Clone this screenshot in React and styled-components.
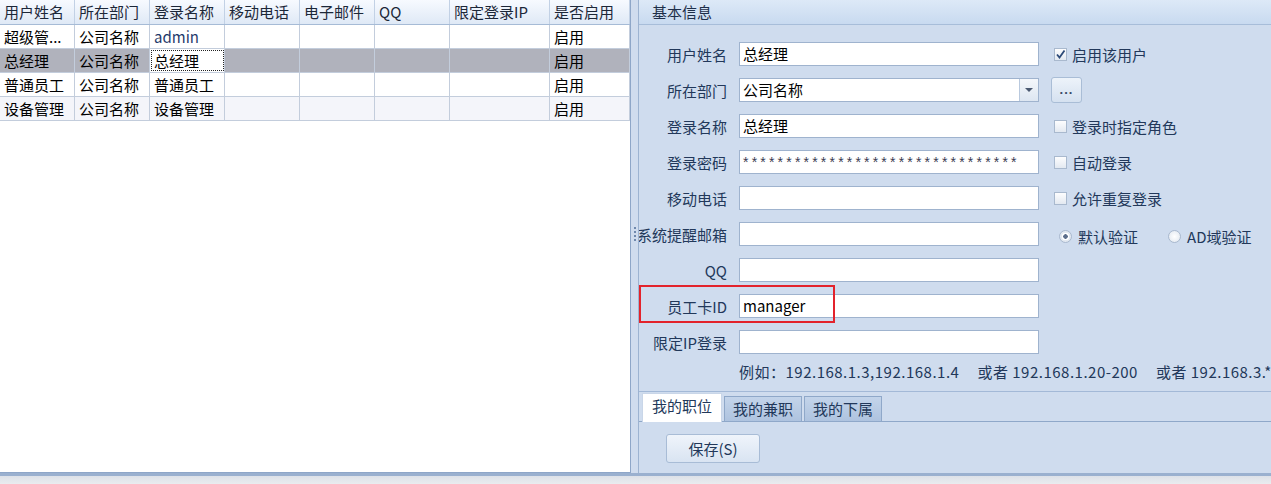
import React from 'react';
import styled, { createGlobalStyle } from 'styled-components';

const GlobalStyle = createGlobalStyle`
  html, body {
    margin: 0;
    padding: 0;
  }
  body {
    width: 1271px;
    height: 484px;
    overflow: hidden;
    background: #e4e6ea;
    font-family: "Noto Sans CJK SC", "Noto Sans", sans-serif;
  }
  * {
    box-sizing: border-box;
  }
`;

const columns = [
    { title: '用户姓名', width: 75 },
    { title: '所在部门', width: 75 },
    { title: '登录名称', width: 75 },
    { title: '移动电话', width: 75 },
    { title: '电子邮件', width: 75 },
    { title: 'QQ', width: 75 },
    { title: '限定登录IP', width: 100 },
    { title: '是否启用', width: 80 },
];

const users = [
    ['超级管...', '公司名称', 'admin', '', '', '', '', '启用'],
    ['总经理', '公司名称', '总经理', '', '', '', '', '启用'],
    ['普通员工', '公司名称', '普通员工', '', '', '', '', '启用'],
    ['设备管理', '公司名称', '设备管理', '', '', '', '', '启用'],
];

const fields = [
    { label: '用户姓名', value: '总经理', extra: { type: 'check', text: '启用该用户', checked: true } },
    { label: '所在部门', value: '公司名称', combo: true, extra: { type: 'more' } },
    { label: '登录名称', value: '总经理', extra: { type: 'check', text: '登录时指定角色' } },
    { label: '登录密码', value: '********************************', password: true, extra: { type: 'check', text: '自动登录' } },
    { label: '移动电话', value: '', extra: { type: 'check', text: '允许重复登录' } },
    { label: '系统提醒邮箱', value: '', extra: { type: 'radio' } },
    { label: 'QQ', value: '' },
    { label: '员工卡ID', value: 'manager', marked: true },
    { label: '限定IP登录', value: '' },
];

function App() {
    return (
        <>
            <GlobalStyle />
            <Window>
                <Main>
                    <GridPane>
                        <GridRow header>
                            {columns.map((col) => (
                                <HeaderCell key={col.title} w={col.width}>{col.title}</HeaderCell>
                            ))}
                        </GridRow>
                        {users.map((row, r) => (
                            <GridRow key={r} selected={r === 1} alt={r === 3}>
                                {row.map((cell, c) => (
                                    <Cell
                                        key={c}
                                        w={columns[c].width}
                                        focused={r === 1 && c === 2}
                                        link={cell === 'admin'}
                                    >
                                        {cell}
                                    </Cell>
                                ))}
                            </GridRow>
                        ))}
                    </GridPane>

                    <Splitter>
                        <Grip />
                    </Splitter>

                    <RightPane>
                        <Group>
                            <GroupTitle>基本信息</GroupTitle>
                            <GroupBody>
                                <Form>
                                    {fields.map((f) => (
                                        <React.Fragment key={f.label}>
                                            <Label>
                                                {f.marked && <Marker />}
                                                <span>{f.label}</span>
                                            </Label>
                                            {f.combo ? (
                                                <Combo>
                                                    <ComboText>{f.value}</ComboText>
                                                    <ComboButton><Arrow /></ComboButton>
                                                </Combo>
                                            ) : (
                                                <TextBox password={f.password}>{f.value}</TextBox>
                                            )}
                                            <Extra>
                                                {f.extra && f.extra.type === 'check' && (
                                                    <CheckOption>
                                                        <CheckBox>
                                                            {f.extra.checked && (
                                                                <svg width="11" height="11" viewBox="0 0 11 11">
                                                                    <path d="M2 5.5 L4.5 8.5 L9.5 1.5" fill="none" stroke="#2c4a78" strokeWidth="1.8" />
                                                                </svg>
                                                            )}
                                                        </CheckBox>
                                                        {f.extra.text}
                                                    </CheckOption>
                                                )}
                                                {f.extra && f.extra.type === 'more' && <MoreButton>...</MoreButton>}
                                                {f.extra && f.extra.type === 'radio' && (
                                                    <Radios>
                                                        <RadioOption>
                                                            <RadioDot checked />
                                                            默认验证
                                                        </RadioOption>
                                                        <RadioOption>
                                                            <RadioDot />
                                                            AD域验证
                                                        </RadioOption>
                                                    </Radios>
                                                )}
                                            </Extra>
                                        </React.Fragment>
                                    ))}
                                </Form>
                                <Hint>
                                    <span>例如：192.168.1.3,192.168.1.4</span>
                                    <span>或者 192.168.1.20-200</span>
                                    <span>或者 192.168.3.*</span>
                                </Hint>
                            </GroupBody>
                        </Group>

                        <TabStrip>
                            <Tab active>我的职位</Tab>
                            <Tab>我的兼职</Tab>
                            <Tab>我的下属</Tab>
                        </TabStrip>

                        <ButtonBar>
                            <SaveButton>保存(S)</SaveButton>
                        </ButtonBar>
                    </RightPane>
                </Main>
                <StatusStrip />
            </Window>
        </>
    )
}

export default App

const Window = styled.div`
    width: 1271px;
    height: 484px;
    display: flex;
    flex-direction: column;
`

const Main = styled.div`
    height: 476px;
    display: flex;
    border-bottom: 3px solid #9ab0cf;
    box-shadow: 0 1px 0 #8aa2c4;
`

const StatusStrip = styled.div`
    flex: 1;
    background: linear-gradient(#dde1e8, #eaecef);
`

const GridPane = styled.div`
    width: 631px;
    background: #fff;
    border-right: 1px solid #8ea6c8;
    border-bottom: 1px solid #8ea6c8;
    overflow: hidden;
`

const GridRow = styled.div`
    display: flex;
    height: ${props => props.header ? '25px' : '24px'};
    background: ${props => props.header
        ? 'linear-gradient(#f7faff, #dfe9f6)'
        : props.selected ? '#b0b2bc' : props.alt ? '#f4f5fa' : '#fff'};
    border-bottom: 1px solid ${props => props.header ? '#a6bbd6' : '#c3cddc'};
`

const HeaderCell = styled.div`
    width: ${props => props.w}px;
    flex: none;
    padding: 0 4px;
    border-right: 1px solid #c2d1e5;
    font-size: 15px;
    line-height: 24px;
    color: #1c2738;
    white-space: nowrap;
    overflow: hidden;
`

const Cell = styled.div`
    width: ${props => props.w}px;
    flex: none;
    padding: 0 4px;
    border-right: 1px solid #c3cddc;
    font-size: 15px;
    line-height: 23px;
    color: ${props => props.link ? '#1f3a6a' : '#000'};
    white-space: nowrap;
    overflow: hidden;
    background: ${props => props.focused ? '#fff' : 'transparent'};
    outline: ${props => props.focused ? '1px dotted #222' : 'none'};
    outline-offset: -2px;
`

const Splitter = styled.div`
    width: 8px;
    flex: none;
    background: #d0dcee;
    border-right: 1px solid #9db3d1;
    display: flex;
    align-items: center;
    justify-content: center;
`

const Grip = styled.div`
    width: 2px;
    height: 14px;
    margin-top: -6px;
    background: repeating-linear-gradient(#6f88ad 0 2px, transparent 2px 4px);
`

const RightPane = styled.div`
    flex: 1;
    min-width: 0;
    background: #cfdcee;
    display: flex;
    flex-direction: column;
    overflow: hidden;
`

const Group = styled.div`
    border-bottom: 1px solid #a3b9d7;
`

const GroupTitle = styled.div`
    height: 25px;
    padding-left: 13px;
    background: linear-gradient(#dde9f7, #c8daf0);
    border-bottom: 1px solid #a7bdd9;
    font-size: 15px;
    line-height: 24px;
    color: #1e2f4a;
`

const GroupBody = styled.div`
    padding: 17px 0 9px;
    overflow: hidden;
`

const Form = styled.div`
    display: grid;
    grid-template-columns: 88px 300px 1fr;
    grid-auto-rows: 24px;
    column-gap: 12px;
    row-gap: 12px;
`

const Label = styled.div`
    position: relative;
    display: flex;
    justify-content: flex-end;
    align-items: center;
    white-space: nowrap;
    font-size: 15px;
    color: #22385a;
`

const Marker = styled.div`
    position: absolute;
    left: 0;
    top: -9px;
    width: 196px;
    height: 38px;
    border: 2px solid #e3232c;
    z-index: 2;
    pointer-events: none;
`

const TextBox = styled.div`
    height: 24px;
    padding: 0 3px;
    background: #fff;
    border: 1px solid #9fb3ce;
    font-size: ${props => props.password ? '14px' : '15px'};
    font-family: ${props => props.password ? '"Liberation Sans", sans-serif' : 'inherit'};
    letter-spacing: ${props => props.password ? '3.2px' : '0'};
    line-height: ${props => props.password ? '22px' : '22px'};
    color: ${props => props.password ? '#3a3a52' : '#000'};
    white-space: nowrap;
    overflow: hidden;
`

const Combo = styled.div`
    height: 24px;
    display: flex;
    background: #fff;
    border: 1px solid #9fb3ce;
`

const ComboText = styled.div`
    flex: 1;
    padding: 0 3px;
    font-size: 15px;
    line-height: 22px;
    color: #000;
`

const ComboButton = styled.div`
    width: 19px;
    border-left: 1px solid #b9c9de;
    background: linear-gradient(#f4f7fb, #dde6f1);
    display: flex;
    align-items: center;
    justify-content: center;
`

const Arrow = styled.div`
    width: 0;
    height: 0;
    border-left: 4px solid transparent;
    border-right: 4px solid transparent;
    border-top: 4px solid #4a5870;
`

const Extra = styled.div`
    display: flex;
    align-items: center;
    white-space: nowrap;
`

const CheckOption = styled.div`
    display: flex;
    align-items: center;
    gap: 5px;
    padding-left: 3px;
    font-size: 15px;
    color: #22385a;
`

const CheckBox = styled.div`
    width: 13px;
    height: 13px;
    border: 1px solid #a9b9ce;
    background: linear-gradient(#fdfdfe, #e3e9f1);
    display: flex;
    align-items: center;
    justify-content: center;
`

const MoreButton = styled.div`
    width: 31px;
    height: 26px;
    border: 1px solid #a9bdd6;
    border-radius: 3px;
    background: linear-gradient(#edf3fa, #d5e1f0);
    font-size: 13px;
    font-weight: bold;
    font-family: "Liberation Sans", sans-serif;
    line-height: 24px;
    letter-spacing: 1px;
    text-align: center;
    color: #3a4a66;
`

const Radios = styled.div`
    display: flex;
    gap: 30px;
    padding-left: 8px;
    margin-top: 4px;
`

const RadioOption = styled.div`
    display: flex;
    align-items: center;
    gap: 6px;
    font-size: 15px;
    color: #22385a;
`

const RadioDot = styled.div`
    width: 13px;
    height: 13px;
    border-radius: 50%;
    border: 1px solid #a9b9ce;
    background: ${props => props.checked
        ? 'radial-gradient(circle, #5d6f8c 0 2px, #fff 2.5px 3.5px, #e3e9f1 4px)'
        : 'radial-gradient(circle, #fff, #dfe6ef)'};
`

const Hint = styled.div`
    display: flex;
    gap: 18px;
    margin: 8px 0 0 100px;
    font-size: 15px;
    letter-spacing: 0.5px;
    line-height: 20px;
    color: #22385a;
    white-space: nowrap;
`

const TabStrip = styled.div`
    display: flex;
    align-items: flex-end;
    gap: 2px;
    height: 30px;
    padding-left: 3px;
    border-bottom: 1px solid #8fa8c9;
`

const Tab = styled.div`
    width: ${props => props.active ? '80px' : '78px'};
    height: ${props => props.active ? '29px' : '25px'};
    margin-bottom: ${props => props.active ? '-1px' : '0'};
    border: 1px solid ${props => props.active ? '#c9d6e8' : '#8fa8c9'};
    border-bottom: none;
    background: ${props => props.active ? '#fff' : 'linear-gradient(#c3d4ea, #aec3df)'};
    font-size: 15px;
    line-height: 24px;
    text-align: center;
    color: #22385a;
`

const ButtonBar = styled.div`
    padding: 12px 0 0 27px;
`

const SaveButton = styled.div`
    width: 94px;
    height: 29px;
    border: 1px solid #a8bcd6;
    border-radius: 3px;
    background: linear-gradient(#eff4fb, #d9e4f2);
    font-size: 15px;
    line-height: 27px;
    text-align: center;
    color: #22385a;
`
